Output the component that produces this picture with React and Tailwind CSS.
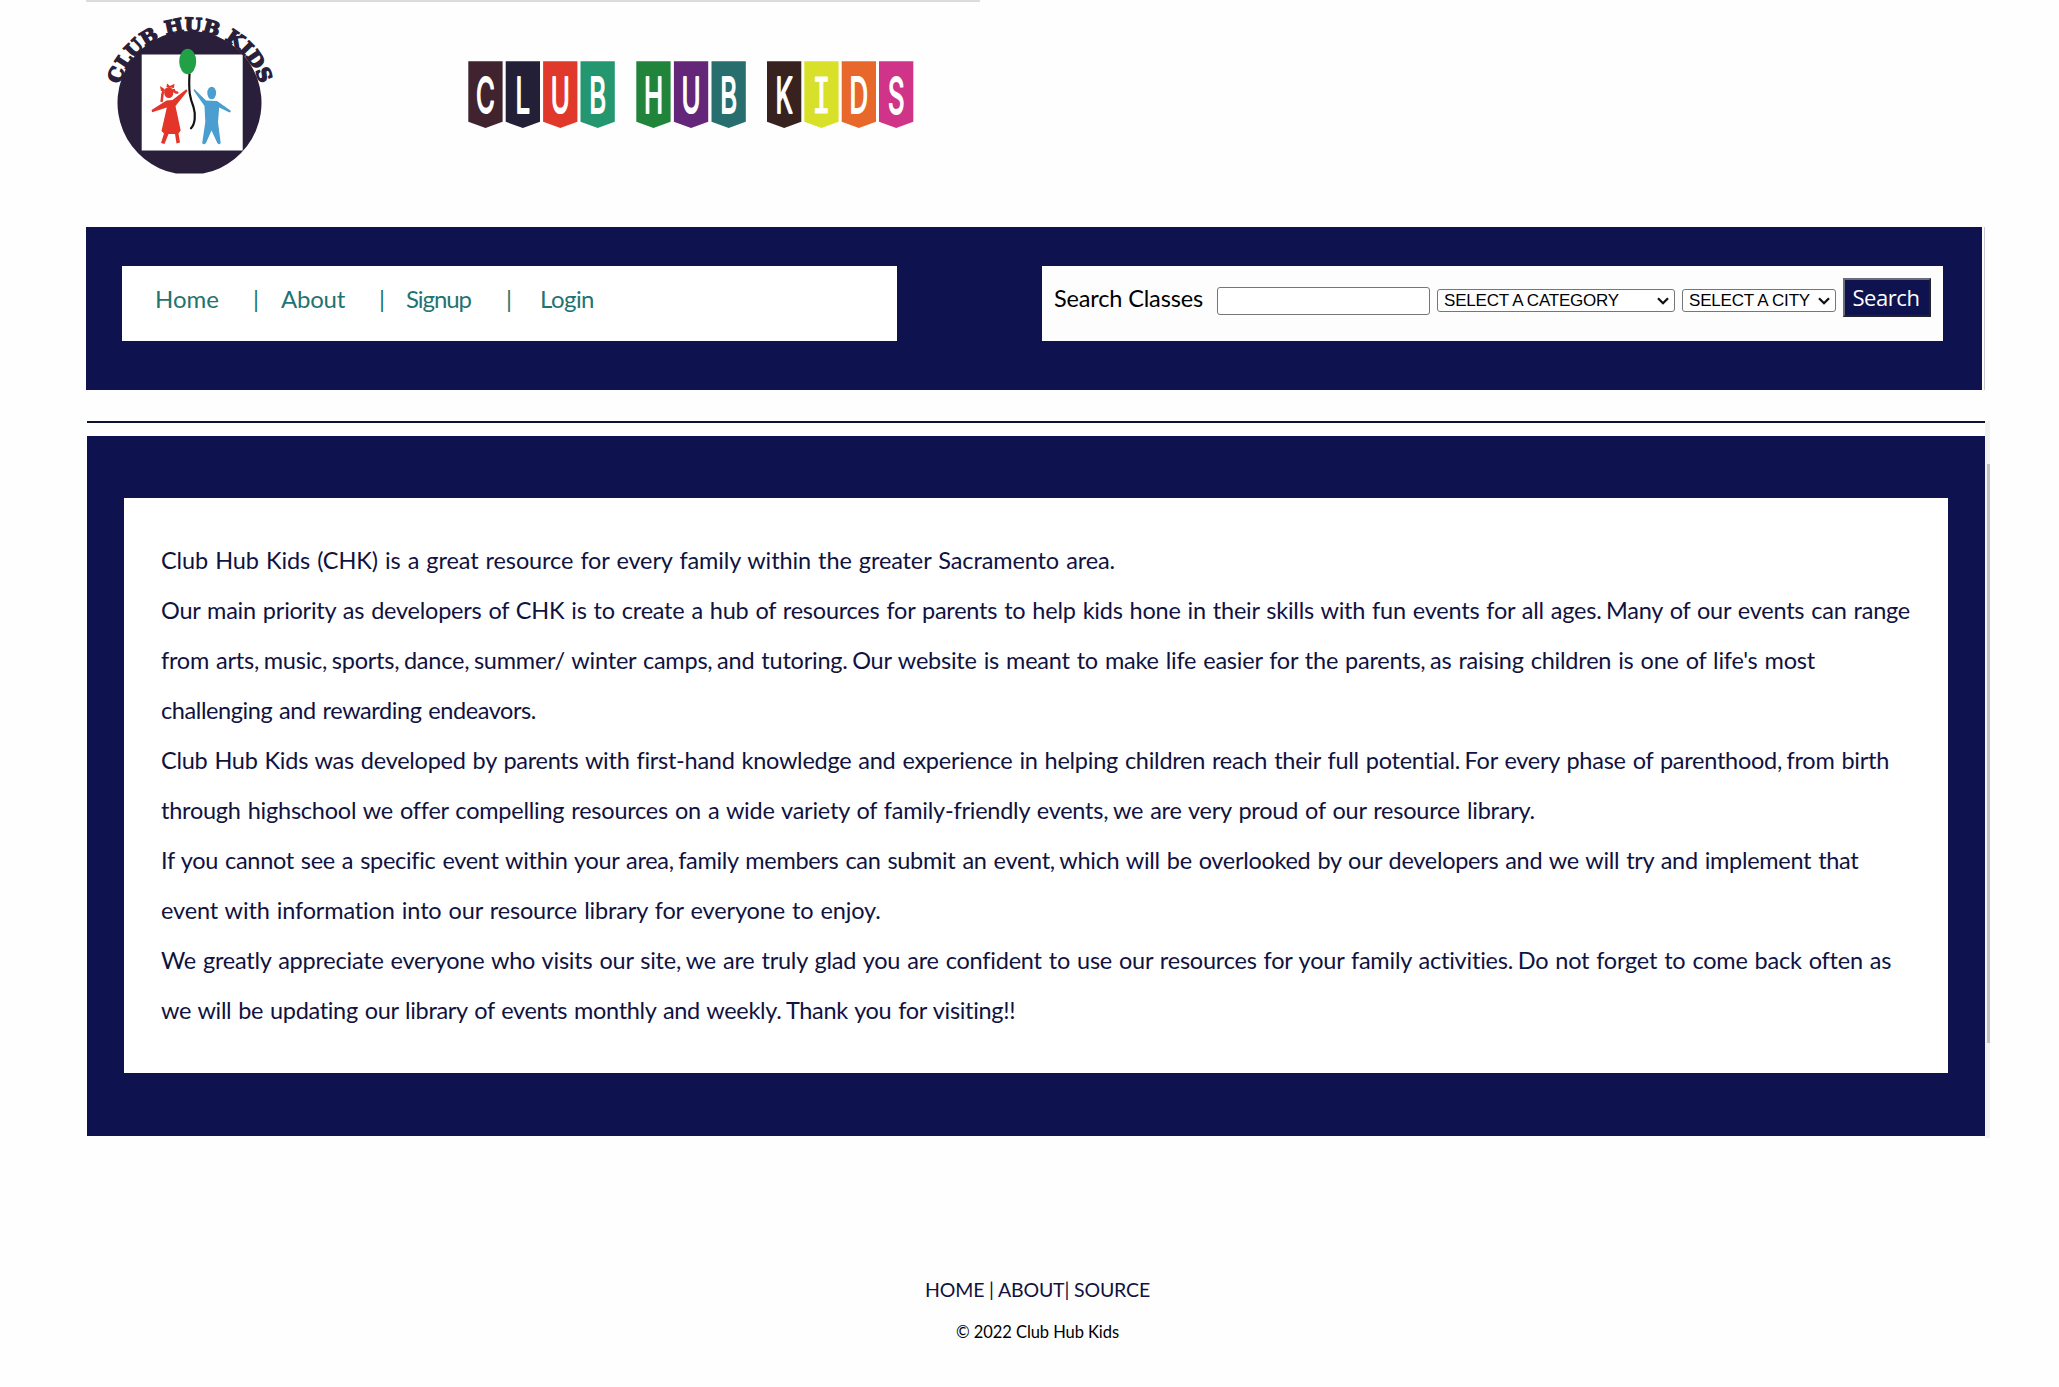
import React, { useLayoutEffect, useRef, useState } from "react";

// One line of text whose letter spacing is adjusted so it spans `width` pixels.
// Spaces that follow a comma or full stop are set tighter than the others.
function Fit({ width, children, className = "" }) {
  const ref = useRef(null);
  const [spacing, setSpacing] = useState(0);
  useLayoutEffect(() => {
    const natural = ref.current.getBoundingClientRect().width;
    setSpacing((width - natural) / children.length);
  }, []);
  const parts = children.split(/(?<=[,.])( )/);
  return (
    <span
      ref={ref}
      className={"inline-block whitespace-pre " + className}
      style={{ letterSpacing: spacing + "px" }}
    >
      {parts.map((part, i) =>
        part === " " ? <span key={i} className="[word-spacing:-1.2px]"> </span> : part
      )}
    </span>
  );
}

const LINES = [
  [954, "Club Hub Kids (CHK) is a great resource for every family within the greater Sacramento area."],
  [1749, "Our main priority as developers of CHK is to create a hub of resources for parents to help kids hone in their skills with fun events for all ages. Many of our events can range"],
  [1654, "from arts, music, sports, dance, summer/ winter camps, and tutoring. Our website is meant to make life easier for the parents, as raising children is one of life's most"],
  [375, "challenging and rewarding endeavors."],
  [1728, "Club Hub Kids was developed by parents with first-hand knowledge and experience in helping children reach their full potential. For every phase of parenthood, from birth"],
  [1373, "through highschool we offer compelling resources on a wide variety of family-friendly events, we are very proud of our resource library."],
  [1697, "If you cannot see a specific event within your area, family members can submit an event, which will be overlooked by our developers and we will try and implement that"],
  [720, "event with information into our resource library for everyone to enjoy."],
  [1730, "We greatly appreciate everyone who visits our site, we are truly glad you are confident to use our resources for your family activities. Do not forget to come back often as"],
  [855, "we will be updating our library of events monthly and weekly. Thank you for visiting!!"],
];

const FLAGS = [
  [0.3, "#41222f", "C"],
  [37.7, "#231f36", "L"],
  [75.1, "#e0392c", "U"],
  [112.5, "#249770", "B"],
  [168.3, "#20843a", "H"],
  [205.9, "#632678", "U"],
  [243.5, "#286e6e", "B"],
  [299, "#37221f", "K"],
  [336.3, "#d9e02a", "I"],
  [373.7, "#e8682c", "D"],
  [411, "#d03488", "S"],
];

function Logo() {
  return (
    <svg width="196" height="174" viewBox="92 4 196 174" className="block overflow-visible">
      <defs>
        <path id="arc" d="M119.800 84.500 A73 73 0 0 1 260.200 84.500" />
      </defs>
      <path d="M176 173.6 A72 72 0 1 1 203 173.6 Z" fill="#2a1f3a" />
      <rect x="141.7" y="54.5" width="101" height="96" fill="#fff" />
      <text fontFamily="'DejaVu Serif', serif" fontWeight="700" fontSize="19" fill="#2a1f3a" stroke="#2a1f3a" strokeWidth="1.400">
        <textPath href="#arc" startOffset="0" textLength="188" lengthAdjust="spacingAndGlyphs">CLUB HUB KIDS</textPath>
      </text>
      <path d="M189.5 74 C188.500 92 190 98 193.500 107 C196 115 195 124 191 128.300" fill="none" stroke="#111" strokeWidth="2.2" strokeLinecap="round" />
      <ellipse cx="187.700" cy="61.500" rx="8.500" ry="12.700" fill="#21a045" />
      <g fill="#e4352a">
        <ellipse cx="168.800" cy="92.500" rx="4.600" ry="5.500" />
        <path d="M164.500 89 L160 86 L161 91 L165 91 Z M166.500 87 L167 83.500 L170 86 L174.500 83.800 L174 88 Z" />
        <path d="M163.500 91 C161.500 95 162.500 98 161.500 102 M173.500 89 C174 93 177 93 178 92" fill="none" stroke="#e4352a" strokeWidth="2.500" />
        <path d="M187.500 91 L186.300 89.200 L172.500 100 L166.500 100.500 L151.500 110 L152.200 112.300 L166.800 107.500 L161.500 131 L164 133.500 L161 143 L164.500 144 L168.500 134 L175 134 L176.500 143.500 L180 142.500 L178.500 133.500 L180.700 130.500 L175.500 106 Z" />
      </g>
      <g fill="#4a9fd0">
        <ellipse cx="211.700" cy="93" rx="4.400" ry="6.300" />
        <path d="M194.300 89 Q193 90 194.300 91.500 L204.500 106 L205.300 122 L202.200 143 Q203.500 145.500 206 143 L211.500 130.500 L217.300 143 Q219.500 145.500 220.700 143 L218 122 L219.200 107.500 L229.500 112.500 Q231.500 112 230.500 110.500 L217 101 L206 100.500 Z" />
      </g>
    </svg>
  );
}

function Banner() {
  return (
    <svg width="446" height="68" viewBox="0 0 446 68" className="block">
      {FLAGS.map(([x, color, letter]) => (
        <g key={x} transform={`translate(${x} 0)`}>
          <path d="M0 0.300 H34.300 V60.800 L17.200 67 L0 60.800 Z" fill={color} />
          <text
            transform={letter === "I" ? "translate(17.200 51.700) scale(0.6 1)" : "translate(17.200 51.700) scale(0.52 1)"}
            textAnchor="middle"
            fontFamily={letter === "I" ? "'DejaVu Sans Mono', monospace" : "Inter, sans-serif"}
            fontSize="49.500"
            fontWeight="400"
            fill="#fff"
            stroke="#fff"
            strokeWidth={letter === "I" ? 1.200 : 2}
            strokeLinejoin="round"
          >
            {letter}
          </text>
        </g>
      ))}
    </svg>
  );
}

function Select({ label, textWidth, className }) {
  return (
    <div className={"flex h-[23px] items-center justify-between rounded-[3px] border border-[#767676] bg-white pl-[6px] pr-[5px] font-['Liberation_Sans',sans-serif] text-[17px] leading-none text-black " + className}>
      <Fit width={textWidth}>{label}</Fit>
      <svg width="12" height="8" viewBox="0 0 12 8">
        <path d="M1 1.200 L6 6.200 L11 1.200" fill="none" stroke="#111" strokeWidth="2.300" />
      </svg>
    </div>
  );
}

export default function App() {
  return (
    <div className="h-[1387px] w-[2059px] overflow-hidden bg-[#fefefe] pl-[86px] font-[Lato,sans-serif]">
      <header className="h-[227px]">
        <div className="h-[2px] w-[894px] bg-[#dcdcdc]" />
        <div className="flex">
          <div className="ml-[6px] mt-[2px]">
            <Logo />
          </div>
          <div className="ml-[180px] mt-[59px]">
            <Banner />
          </div>
        </div>
      </header>

      <div className="flex h-[163px] w-[1899px] border-r border-[#c9c9d2]">
        <div className="mr-[2px] flex w-[1896px] items-start justify-between bg-[#0e134f] pl-[36px] pr-[39px] pt-[39px]">
          <nav className="flex h-[75px] w-[775px] bg-white pl-[33px] pt-[15px] text-[24px] leading-[36px] text-[#1f7472]">
            <a className="w-[98px]"><Fit width={64}>Home</Fit></a>
            <span className="w-[28px]">|</span>
            <a className="w-[98px]"><Fit width={64}>About</Fit></a>
            <span className="w-[27px]">|</span>
            <a className="w-[100px]"><Fit width={65}>Signup</Fit></a>
            <span className="w-[34px]">|</span>
            <a><Fit width={54}>Login</Fit></a>
          </nav>
          <form className="flex h-[75px] w-[901px] items-start bg-[#fdfdfd] pl-[12px]">
            <label className="mt-[14px] w-[163px] text-[23.5px] leading-[36px] text-black"><Fit width={149}>Search Classes</Fit></label>
            <input className="mt-[21px] h-[28px] w-[213px] rounded-[3px] border border-[#767676] bg-white" />
            <Select label="SELECT A CATEGORY" textWidth={175} className="ml-[7px] mt-[23px] w-[238px]" />
            <Select label="SELECT A CITY" textWidth={121} className="ml-[7px] mt-[23px] w-[154px]" />
            <button type="button" className="ml-[7px] mt-[12px] flex h-[39px] w-[88px] items-center justify-center border-2 border-b-[#22222c] border-l-[#6b6c7a] border-r-[#22222c] border-t-[#6b6c7a] bg-[#0e134f] pb-[2px] pr-[2px] font-['Open_Sans',sans-serif] text-[22px] font-medium leading-none text-white">
              <Fit width={67}>Search</Fit>
            </button>
          </form>
        </div>
      </div>

      <div className="ml-px mt-[31px] flex">
        <main className="w-[1898px]">
          <div className="h-[2px] bg-[#0b1230]" />
          <section className="mt-[13px] h-[700px] bg-[#0e134f] pl-[37px] pr-[37px] pt-[62px]">
            <div className="h-[575px] bg-white pl-[37px] pt-[37px] text-[23.5px] leading-[50px] text-[#10123f] [word-spacing:1.2px]">
              {LINES.map(([width, text]) => (
                <p key={text} className="h-[50px]">
                  <Fit width={width}>{text}</Fit>
                </p>
              ))}
            </div>
          </section>
        </main>
        <div className="h-[717px] w-[5px] bg-[#f1f1f1] pl-[2px] pt-[43px]">
          <div className="h-[579px] bg-[#c1c1c1]" />
        </div>
      </div>

      <footer className="mt-[137px] flex w-[1903px] flex-col items-center">
        <div className="h-[42px] text-[19.5px] leading-[30px] text-[#10123f]">
          <Fit width={225}>HOME | ABOUT| SOURCE</Fit>
        </div>
        <div className="text-[16.5px] leading-[30px] text-black">
          <Fit width={163}>© 2022 Club Hub Kids</Fit>
        </div>
      </footer>
    </div>
  );
}
